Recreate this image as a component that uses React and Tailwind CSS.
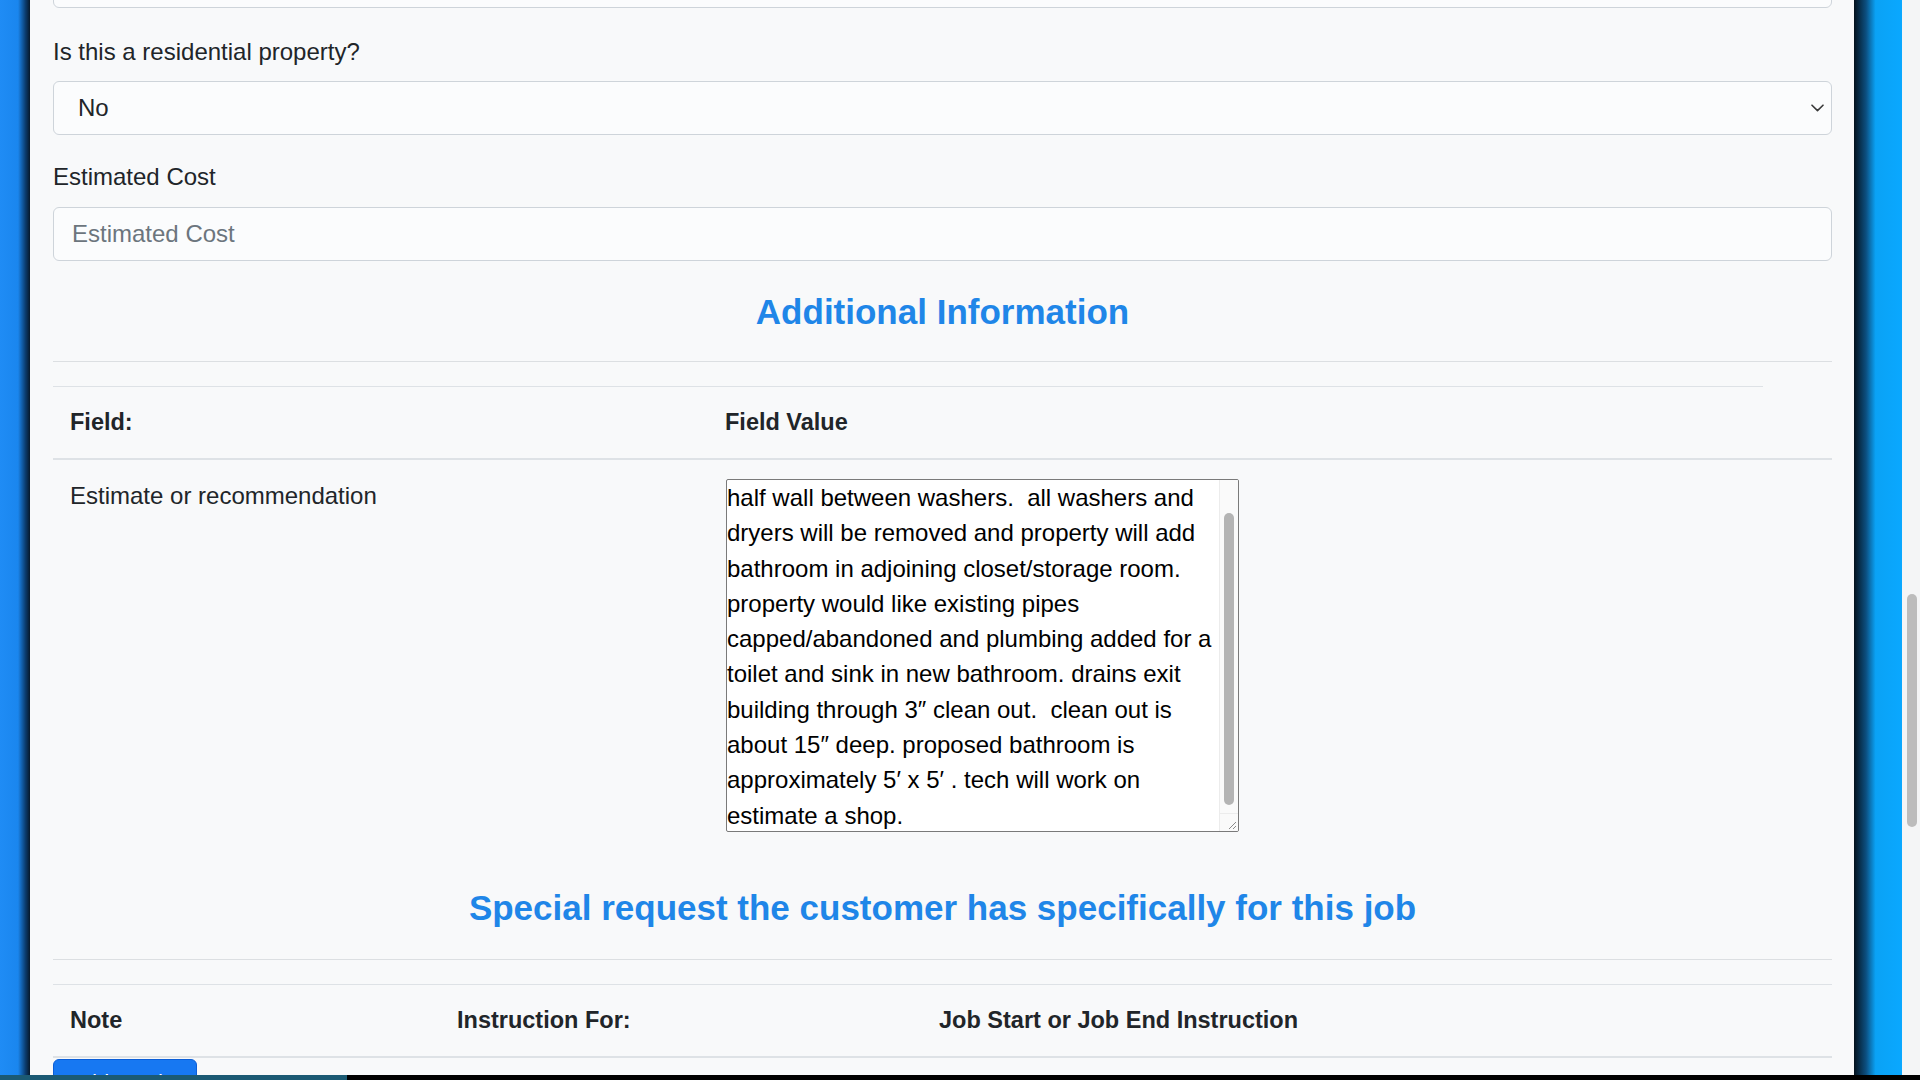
import React from "react";

const lines = [
  "half wall between washers.  all washers and",
  "dryers will be removed and property will add",
  "bathroom in adjoining closet/storage room.",
  "property would like existing pipes",
  "capped/abandoned and plumbing added for a",
  "toilet and sink in new bathroom. drains exit",
  "building through 3\u2033 clean out.  clean out is",
  "about 15\u2033 deep. proposed bathroom is",
  "approximately 5\u2032 x 5\u2032 . tech will work on",
  "estimate a shop.",
];

function Chevron() {
  return (
    <svg width="13" height="8" viewBox="0 0 13 8" fill="none">
      <path d="M1 1.2 L6.5 6.6 L12 1.2" stroke="#3a3a3a" strokeWidth="1.6" strokeLinecap="round" strokeLinejoin="round" />
    </svg>
  );
}

function Heading({ children, className }) {
  return (
    <h4 className={"text-center text-[35px] font-bold leading-[42px] text-[#1f86e8] " + className}>
      {children}
    </h4>
  );
}

function ValueBox() {
  return (
    <div className="flex h-[353px] w-[513px] overflow-hidden rounded-[2px] border border-[#7a7a7a] bg-white">
      <div className="flex-1 text-[24px] leading-[35.3px] text-black">
        {lines.map((l, i) => (
          <div key={i} className="whitespace-pre">
            {l}
          </div>
        ))}
      </div>
      <div className="flex w-[19px] flex-col border-l border-[#ececec] bg-[#fafafa]">
        <div className="mx-auto mt-[33px] h-[292px] w-[10px] rounded-full bg-[#b4b4b4]" />
        <div className="mt-auto flex h-[18px] items-end justify-end border-t border-[#ececec] pr-[1px] pb-[1px]">
          <svg width="10" height="10" viewBox="0 0 10 10">
            <path d="M9 2 L2 9 M9 6 L6 9" stroke="#8a8a8a" strokeWidth="1" />
          </svg>
        </div>
      </div>
    </div>
  );
}

export default function App() {
  return (
    <div className="flex h-[1080px] w-[1920px] flex-col overflow-hidden bg-black font-['Liberation_Sans',Arial,sans-serif] text-[24px] text-[#212529]">
      <div className="flex h-[1075px]">
        <div className="w-[30px] bg-[linear-gradient(to_right,#1f8cf5_0%,#1a86ee_60%,#0b3c6e_85%,#07182a_100%)]" />

        <div className="flex-1 overflow-hidden bg-[#f8f9fa] pl-[23px] pr-[22px]">
          <div className="-mt-[46px] h-[54px] rounded-[6px] border border-[#ced4da] bg-[#fbfcfd]" />

          <div className="mt-[27px] leading-[33px]">Is this a residential property?</div>
          <div className="mt-[13px] flex h-[54px] items-center justify-between rounded-[6px] border border-[#ced4da] bg-[#fbfcfd] pl-[24px] pr-[7px]">
            <span>No</span>
            <Chevron />
          </div>

          <div className="mt-[25px] leading-[33px]">Estimated Cost</div>
          <div className="mt-[14px] flex h-[54px] items-center rounded-[6px] border border-[#ced4da] bg-[#fbfcfd] pl-[18px] text-[#6c757d]">
            Estimated Cost
          </div>

          <Heading className="mt-[30px]">Additional Information</Heading>
          <div className="mt-[28px] h-px bg-[#dcdfe2]" />

          <div className="mt-[24px] w-[1710px] border-t border-[#dee2e6]" />
          <div className="flex border-b-2 border-[#dee2e6] py-[19px] text-[23.5px] font-bold leading-[33px]">
            <div className="w-[655px] px-[17px]">Field:</div>
            <div className="px-[17px]">Field Value</div>
          </div>
          <div className="flex py-[19px] leading-[33px]">
            <div className="w-[655px] px-[17px]">Estimate or recommendation</div>
            <div className="pl-[18px]">
              <ValueBox />
            </div>
          </div>

          <Heading className="mt-[36px]">Special request the customer has specifically for this job</Heading>
          <div className="mt-[30px] h-px bg-[#dcdfe2]" />

          <div className="mt-[24px] border-t border-[#dee2e6]" />
          <div className="flex border-b-2 border-[#dee2e6] py-[19px] text-[23.5px] font-bold leading-[33px]">
            <div className="w-[387px] px-[17px]">Note</div>
            <div className="w-[482px] px-[17px]">Instruction For:</div>
            <div className="px-[17px]">Job Start or Job End Instruction</div>
          </div>
          <button className="mt-px flex h-[54px] w-[144px] items-start overflow-hidden whitespace-nowrap rounded-[6px] border border-[#0b5ed7] bg-[#1778f2] pl-[16px] pt-[10px] text-left text-[22px] leading-[26px] text-white">
            Add another
          </button>
        </div>

        <div className="w-[48px] bg-[linear-gradient(to_right,#05121d_0%,#0c4f80_25%,#0aa2f5_45%,#0aa8ff_100%)]" />
        <div className="flex w-[18px] flex-col bg-[#f4f5f6]">
          <div className="ml-[5px] mt-[594px] h-[233px] w-[10px] rounded-full bg-[#bcbcbc]" />
        </div>
      </div>
      <div className="flex h-[5px]">
        <div className="w-[347px] bg-[#1b5a73]" />
      </div>
    </div>
  );
}
